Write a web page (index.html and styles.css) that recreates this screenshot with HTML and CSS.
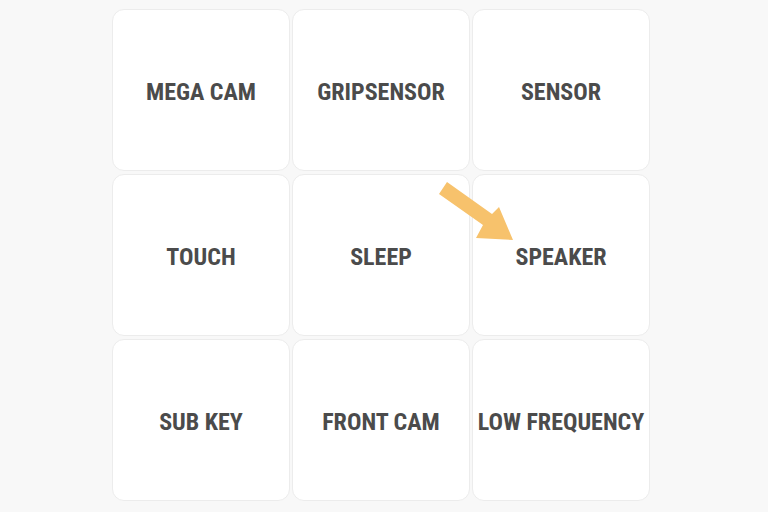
FILE: index.html
```html
<!DOCTYPE html>
<html lang="en">
<head>
    <meta charset="UTF-8">
    <title>Test Menu</title>
    <link rel="stylesheet" href="styles.css">
</head>
<body>
    <div class="menu">
        <div class="tile">MEGA CAM</div>
        <div class="tile">GRIPSENSOR</div>
        <div class="tile">SENSOR</div>
        <div class="tile">TOUCH</div>
        <div class="tile">SLEEP</div>
        <div class="tile">SPEAKER</div>
        <div class="tile">SUB KEY</div>
        <div class="tile">FRONT CAM</div>
        <div class="tile">LOW FREQUENCY</div>

        <!-- pointer to the speaker test -->
        <svg class="arrow" width="82" height="66" viewBox="0 0 82 66">
            <path d="M3 16 L11 4 L56 36 L63 29 L77 62 L40 60 L47 47 Z" fill="#f7c26c"/>
        </svg>
    </div>
</body>
</html>
```

FILE: styles.css
```css
body {
    margin: 0;
    background-color: #f8f8f8;
    font-family: Roboto, "Liberation Sans", sans-serif;
}
.menu {
    position: relative;
    width: 538px;
    margin-left: 112px;
    padding-top: 9px;
    display: grid;
    grid-template-columns: repeat(3, 178px);
    grid-auto-rows: 162px;
    gap: 3px 2px;
}
.tile {
    display: flex;
    align-items: center;
    justify-content: center;
    padding-top: 3px;
    background: #fff;
    border: 1px solid #ececec;
    border-radius: 12px;
    color: #4b4b4b;
    font-size: 24px;
    font-weight: 700;
    font-stretch: 85%;
    white-space: nowrap;
}
.arrow {
    position: absolute;
    left: 324px;
    top: 178px;
}
```
